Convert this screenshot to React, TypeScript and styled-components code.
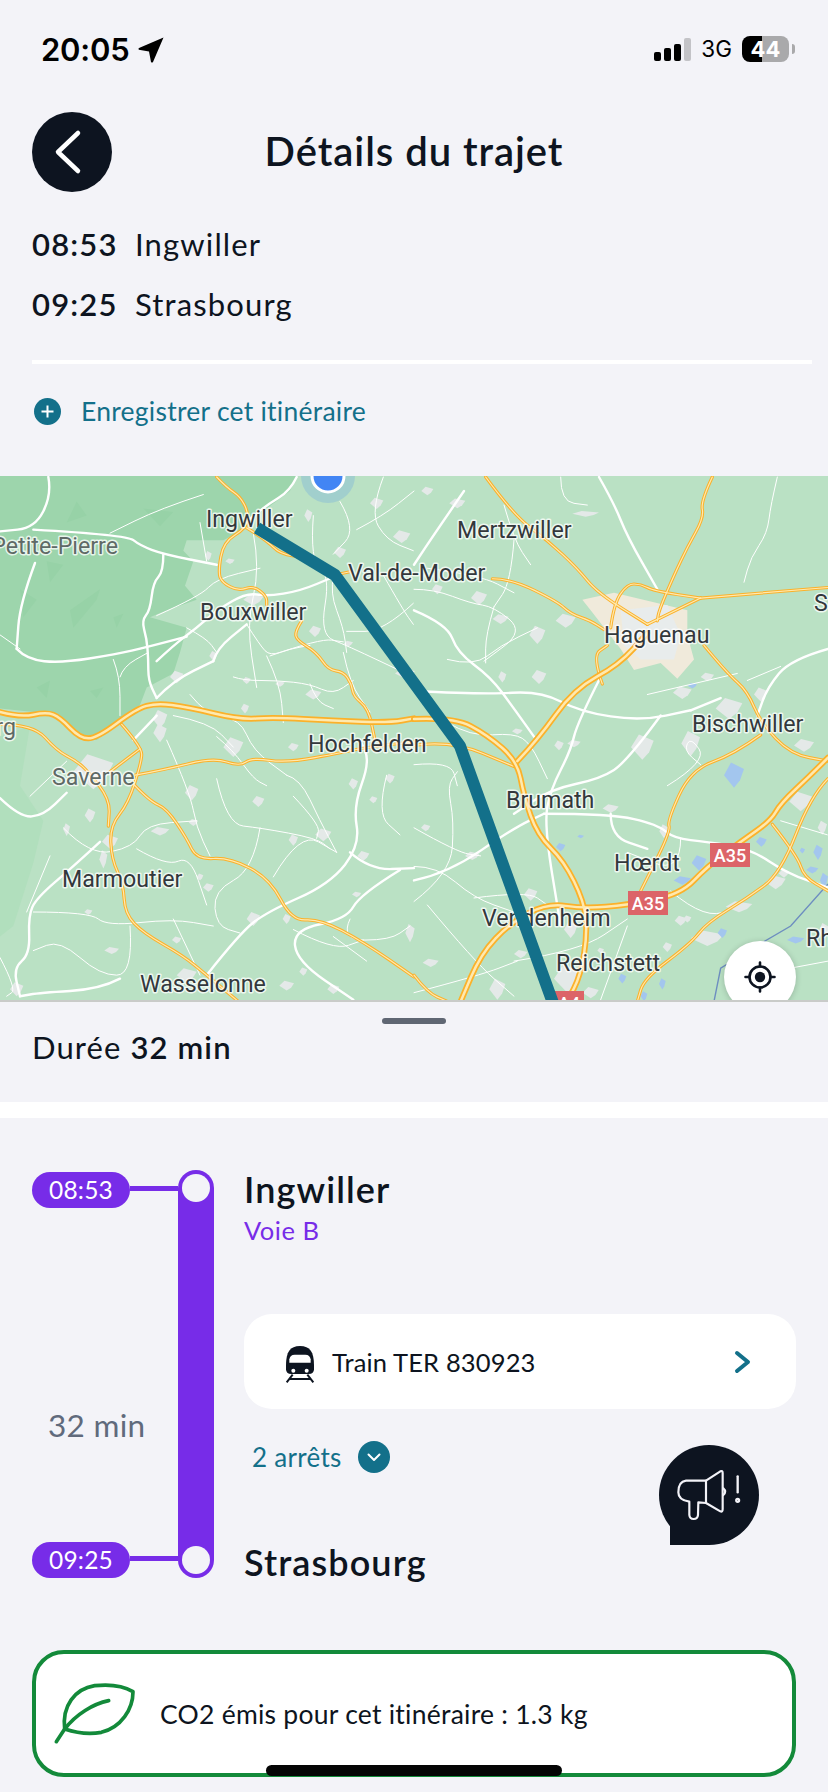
import React from "react";
import styled, { createGlobalStyle } from "styled-components";

const GlobalStyle = createGlobalStyle`
  html, body { margin: 0; padding: 0; background: #f3f3f8; }
  * { box-sizing: border-box; }
`;

const font = `"Lato", "Noto Sans", sans-serif`;
const ink = "#0d1420";
const teal = "#13708a";
const purple = "#772ce8";

const Page = styled.div`
  position: relative;
  width: 828px;
  height: 1792px;
  overflow: hidden;
  background: #f3f3f8;
  font-family: ${font};
  color: ${ink};
`;

const StatusBar = styled.div`
  height: 100px;
  padding: 0 39px 0 41px;
  display: flex;
  align-items: flex-start;
  justify-content: space-between;
  color: #000;
`;
const StatusLeft = styled.div`
  margin-top: 31px;
  display: flex;
  align-items: center;
  gap: 8px;
  font: 600 31px/38px "Inter", sans-serif;
  letter-spacing: -0.2px;
`;
const StatusRight = styled.div`
  margin-top: 36px;
  display: flex;
  align-items: center;
  gap: 10px;
  font: 400 22.5px/26px "Inter", sans-serif;
`;
const Battery = styled.div`
  position: relative;
  width: 47px;
  height: 26px;
  border-radius: 8px;
  background: linear-gradient(90deg, #000 0 43%, #a9a9ab 43% 100%);
  color: #fff;
  font: 700 22px/26px "Inter", sans-serif;
  text-align: center;
  &::after {
    content: "";
    position: absolute;
    right: -6px;
    top: 8px;
    width: 3px;
    height: 10px;
    border-radius: 0 3px 3px 0;
    background: #a9a9ab;
  }
`;

const Header = styled.header`
  margin-top: 12px;
  padding: 0 32px;
  display: grid;
  grid-template-columns: 80px 1fr 80px;
  align-items: center;
`;
const BackButton = styled.div`
  width: 80px;
  height: 80px;
  border-radius: 50%;
  background: ${ink};
  display: flex;
  align-items: center;
  justify-content: center;
`;
const Title = styled.h1`
  margin: -2px 0 0;
  text-align: center;
  font: 600 40px/48px ${font};
  letter-spacing: 0.95px;
`;

const Trip = styled.div`
  margin-top: 22px;
  padding: 0 16px 0 32px;
`;
const TripRow = styled.div`
  height: 60px;
  display: flex;
  align-items: center;
  gap: 18px;
  font: 400 31px/40px ${font};
  letter-spacing: 1.15px;
`;
const TripTime = styled.span`
  font-weight: 600;
  width: 85px;
`;
const Divider = styled.div`
  margin: 26px 16px 0 32px;
  height: 4px;
  background: #fff;
`;
const SaveRow = styled.div`
  margin-top: 32px;
  height: 30px;
  padding-left: 34px;
  display: flex;
  align-items: center;
  gap: 20px;
  color: ${teal};
  font: 400 26.5px/30px ${font};
  letter-spacing: 0.25px;
`;
const RoundIcon = styled.span<{ $size: number }>`
  width: ${(p) => p.$size}px;
  height: ${(p) => p.$size}px;
  border-radius: 50%;
  background: ${teal};
  display: flex;
  align-items: center;
  justify-content: center;
  flex: none;
`;

const MapFrame = styled.div`
  position: relative;
  margin-top: 50px;
  height: 526px;
  overflow: hidden;
  background: #bae1c4;
  border-bottom: 2px solid #c9cbc9;
`;
const MapArt = styled.svg`
  display: block;
  width: 828px;
  height: 526px;
`;
const LocateButton = styled.div`
  position: absolute;
  left: 724px;
  top: 465px;
  width: 72px;
  height: 72px;
  border-radius: 50%;
  background: #fff;
  box-shadow: 0 1px 6px rgba(0, 0, 0, 0.2);
  display: flex;
  align-items: center;
  justify-content: center;
`;

const Sheet = styled.section`
  height: 100px;
  padding: 16px 32px 0;
`;
const Handle = styled.div`
  width: 64px;
  height: 6px;
  margin: 0 auto;
  border-radius: 3px;
  background: #5f6673;
`;
const Duration = styled.div`
  margin-top: 3px;
  font: 400 31px/40px ${font};
  letter-spacing: 1.1px;
  b {
    font-weight: 600;
  }
`;
const WhiteBand = styled.div`
  height: 16px;
  background: #fff;
`;

const Journey = styled.section`
  padding: 52px 32px 0;
  height: 532px;
  display: grid;
  grid-template-columns: 146px 36px 1fr;
  align-items: start;
`;
const TimesColumn = styled.div`
  height: 408px;
  display: flex;
  flex-direction: column;
  padding-top: 2px;
`;
const TimeRow = styled.div`
  display: flex;
  align-items: center;
`;
const Pill = styled.div`
  width: 98px;
  height: 36px;
  border-radius: 18px;
  background: ${purple};
  color: #fff;
  text-align: center;
  font: 400 24.5px/36px ${font};
  letter-spacing: 0.2px;
`;
const Connector = styled.div`
  flex: 1;
  height: 5px;
  margin-top: -4px;
  background: ${purple};
`;
const JourneyTime = styled.div`
  flex: 1;
  padding: 197px 0 0 16px;
  color: #606a7c;
  font: 400 31.5px/40px ${font};
  letter-spacing: 0.3px;
`;
const Rail = styled.div`
  height: 408px;
  padding: 4px;
  border-radius: 18px;
  background: ${purple};
  display: flex;
  flex-direction: column;
  justify-content: space-between;
`;
const Stop = styled.div`
  height: 28px;
  border-radius: 50%;
  background: #f3f3f8;
`;
const Details = styled.div`
  margin: -3px 0 0 30px;
`;
const StationName = styled.div`
  font: 600 36px/44px ${font};
  letter-spacing: 1.1px;
`;
const Platform = styled.div`
  color: ${purple};
  font: 400 25.5px/38px ${font};
  letter-spacing: 0.5px;
`;
const VehicleCard = styled.div`
  margin-top: 65px;
  height: 95px;
  padding: 0 44px 0 26px;
  border-radius: 28px;
  background: #fff;
  display: flex;
  align-items: center;
  gap: 2px;
  font: 400 25.5px/32px ${font};
  letter-spacing: 0.15px;
`;
const VehicleName = styled.span`
  flex: 1;
`;
const StopsToggle = styled.div`
  margin: 30px 0 65px 8px;
  height: 36px;
  display: flex;
  align-items: center;
  gap: 16px;
  color: ${teal};
  font: 400 26px/36px ${font};
  letter-spacing: 0.3px;
`;

const Bubble = styled.div`
  position: absolute;
  left: 659px;
  top: 1445px;
  width: 100px;
  height: 100px;
  border-radius: 50%;
  background: ${ink};
  &::after {
    content: "";
    position: absolute;
    left: 11px;
    bottom: 0;
    width: 40px;
    height: 30px;
    background: ${ink};
  }
  svg {
    position: absolute;
    z-index: 1;
    left: -18px;
    top: -16px;
  }
`;

const CarbonCard = styled.section`
  margin: 0 32px;
  height: 127px;
  padding: 0 2px;
  border: 4px solid #138a3a;
  border-radius: 32px;
  background: #fff;
  display: flex;
  align-items: center;
  gap: 12px;
  font: 400 26.5px/32px ${font};
  letter-spacing: 0.25px;
`;
const HomeIndicator = styled.div`
  position: absolute;
  left: 266px;
  top: 1765px;
  width: 296px;
  height: 11px;
  border-radius: 6px;
  background: #050505;
`;

type Pts = string;
const forest: Pts =
  "0,17 890,17 870,60 800,110 750,140 740,165 670,200 560,200 550,230 580,260 555,330 590,370 500,400 450,420 560,450 540,520 520,580 440,620 420,670 290,770 240,760 180,710 100,690 0,680";

const forestShade: Pts[] = [
  "210,400 300,340 290,370 220,450",
  "60,340 110,370 70,420",
  "140,260 190,270 150,320",
  "230,90 260,130 200,150",
  "340,420 370,410 350,450",
  "270,630 310,620 290,650",
  "430,110 520,120 480,160",
  "110,620 150,600 140,650",
];
const lowerShade: Pts = "0,760 90,730 60,900 130,1000 100,1120 40,1300 0,1330";

const whiteMajorL: Pts[] = [
  "145,20 155,70 105,165 0,175",
  "100,170 380,185 420,215 490,240 650,270",
  "490,240 490,290 460,320 450,400 425,430 440,480 445,540 445,600 470,650",
  "50,510 80,540 185,550 350,525 440,505 560,475",
  "105,265 60,380 50,510",
  "470,650 520,600 640,545",
  "470,545 520,500 590,450 650,400 740,350 800,360 900,345 1000,305",
  "890,20 870,60 800,100 750,140",
  "400,770 470,700",
  "0,935 60,990 130,985 200,920",
  "300,1060 220,1130 110,1220 85,1270 90,1380 40,1420 60,1500",
  "620,1440 720,1320 800,1260 990,1180 1080,1070 1060,960 1110,830 1080,770",
  "1050,1090 1110,1140 1242,1135",
  "1200,1140 1080,1210 1040,1280 880,1310 890,1400 1060,1510",
  "640,545 650,510 740,440",
  "360,1450 300,1480 120,1490 60,1500",
];
const whiteThinL: Pts[] = [
  "0,470 60,510",
  "470,415 600,360 650,310 780,280",
  "610,70 480,110 330,180",
  "360,590 370,560 445,520",
  "600,150 620,260",
  "760,180 780,280 740,440 770,620",
  "940,130 930,260 990,300 960,470 1040,500 1240,590",
  "1020,90 1070,170 1000,240",
  "1030,520 1050,610 1110,690",
  "800,530 840,610 850,720",
  "570,640 620,700 720,710 760,800 860,870",
  "500,770 570,920 590,1020 630,1100",
  "650,880 680,1010 780,1020 950,1050 990,1080",
  "880,930 960,1010 950,1050",
  "780,1020 760,1140 640,1200 650,1300 720,1320",
  "190,1020 270,1100 400,1075 440,1010 590,1000",
  "410,1080 500,1130 570,1100 620,1240",
  "100,1260 270,1260 320,1300 520,1280 640,1300",
  "390,1300 400,1440 300,1440 180,1340 100,1370",
  "520,1280 600,1440",
  "820,1160 900,1030 1010,1090",
  "1050,1280 1020,1340 1170,1340 1230,1300",
  "880,1310 1000,1370 1090,1340",
  "0,1390 50,1480 20,1500",
  "560,450 620,480 650,520",
  "740,440 780,500 810,530 870,510 930,500",
  "810,530 960,480 1030,490",
  "700,590 730,600 830,600 930,610 1000,640 1060,600",
  "930,610 950,660 1000,680",
  "1000,305 990,350 1030,450 1040,520",
  "1240,380 1150,460 1040,460",
  "340,540 360,590 360,700",
  "650,760 700,800 760,880 800,900",
  "520,700 630,720 700,790",
  "860,870 900,880 960,1000 1010,1090",
  "1150,20 1110,120 1160,200 1240,230",
  "1160,870 1130,980 1200,1040",
  "1070,170 1150,130 1242,60",
  "1150,300 1210,400 1240,440",
  "1100,1400 1000,1330",
  "150,1100 80,1260",
  "200,830 90,930",
];
const orangeThinL: Pts[] = [
  "650,20 680,50 720,75 745,120 740,165 670,205 655,290 665,320 715,345 760,330 800,360 800,385",
  "740,165 800,200 840,240 920,250 1000,300 1050,290",
  "905,430 885,460 890,485 950,520 985,570 1030,575 1055,610 1060,645 1105,680 1125,770",
  "365,725 425,790 425,830 385,950 330,1015 335,1110 370,1180 375,1265 430,1320 550,1385 620,1440 715,1515",
  "0,725 100,725 170,800 230,830 265,860 330,940 325,1015",
  "330,860 420,795",
  "405,870 490,855 640,820 720,845 755,820 860,835 1030,805 1100,790 1242,775",
  "400,895 450,945 500,965 560,1050 590,1110 690,1105 810,1165 875,1285 960,1280 1090,1345 1242,1445",
];
const orangeMajorL: Pts[] = [
  "0,690 60,705 140,690 180,705 240,765 290,765 410,680 470,665 560,675 720,712 820,705 1000,715 1170,720 1242,708",
];
const orangeThinR: Pts[] = [
  "0,785 110,770 300,845",
  "215,20 300,130 400,200 490,280 550,350 700,440",
  "235,310 290,310 430,375 470,410 530,430 570,455",
  "895,20 860,90 870,135 820,220 780,300 735,400 730,430",
  "565,610 535,530 580,500",
  "590,450 600,380 640,325 680,325 720,345 860,365",
  "700,440 860,365",
  "870,500 940,580 1000,630 1040,720 1130,810 1242,830",
  "1040,755 960,810 830,855 760,1000 770,1030 680,1200",
  "1075,1010 1150,1100 1170,1160 1242,1200",
  "1242,880 1190,930 1100,1150 1000,1220 880,1290 830,1350 690,1450 670,1515",
  "0,1440 40,1490 100,1515",
  "860,365 1242,335",
];
const orangeMajorR: Pts[] = [
  "0,710 120,705 220,755 310,830 330,930 370,1040 450,1115 510,1230 520,1320 500,1440 460,1515",
  "310,830 370,770 480,625 615,555 700,465",
  "1242,820 1190,870 1100,950 1070,1000 980,1060 880,1130 800,1210 640,1240 510,1250 400,1235 290,1290 200,1380 140,1515",
];
const whiteMajorR: Pts[] = [
  "555,20 600,95 640,190 730,340",
  "0,400 100,440 130,520 230,590 300,680 360,760",
  "0,630 210,640 380,630 500,690 680,715 830,685",
  "740,700 640,830 560,880 410,910 300,980",
  "560,590 490,720 470,800 410,910 390,1010 440,1300",
  "1242,510 1130,540 1060,620 1030,700",
  "830,685 920,650",
  "390,980 590,980 730,1010 780,1050 880,1060 1010,1080 1120,1150 1242,1190",
  "590,980 590,1045 700,1080",
  "0,1170 100,1150 300,1020 390,980",
  "150,60 70,170 0,270",
];
const whiteThinR: Pts[] = [
  "0,340 60,340 170,380 240,390 330,460 210,545",
  "240,390 215,470 215,550",
  "300,200 290,320 240,390",
  "0,1230 110,1150 120,1000 100,900 130,860",
  "0,1020 130,1090 200,1100",
  "0,1130 70,1130 180,1220 300,1260",
  "40,1240 180,1400 300,1500",
  "640,1300 560,1510",
  "770,1200 880,1290 1000,1220",
  "1090,20 1070,100 1060,180 1010,250 990,320",
  "970,580 700,640",
  "300,1400 500,1370 640,1280",
  "0,1490 200,1440 310,1400",
  "760,900 880,830 830,760 810,800 860,840",
  "0,840 110,830 130,900",
  "100,720 170,760 300,750 350,780 400,880",
  "100,540 180,560 260,500 370,450",
  "270,100 300,200 350,270",
  "40,280 200,300 300,350",
  "440,20 440,90 520,100",
  "800,1050 800,1150 640,1090",
  "1000,600 1100,560",
  "1100,1000 1240,1040",
  "180,1220 340,1200 400,1240",
  "1130,1420 1242,1400",
];
const townsL: number[][] = [
  [760,370,30,16],[280,860,60,50],[700,790,30,28],[480,750,20,26],[940,640,24,14],[735,680,12,14],[1130,95,20,16],[1205,190,26,18],[1020,235,18,16],[925,130,12,18],[575,920,20,22],[775,945,18,16],[1060,895,14,16],[480,1030,28,12],[970,1040,24,18],[880,1055,14,16],[580,1005,14,10],[330,1060,24,20],[310,1110,12,26],[200,1025,10,18],[265,1260,12,8],[335,1370,22,10],[530,1340,14,10],[760,1280,20,20],[860,1280,12,14],[1090,1100,18,14],[1215,580,30,14],[530,590,20,18],[640,530,12,14],[625,245,10,14],[690,260,14,8],[945,460,18,16],[840,610,14,8],[480,710,22,26],[1170,880,14,14],[1120,940,12,10],[860,1470,22,14],[1230,1320,14,26],[1070,1210,14,8],[625,1190,16,12],[600,1160,10,10],[50,1480,20,20],[560,1440,30,20],[740,600,12,10],[270,985,16,20],[880,790,16,12],[1045,495,14,8],[910,1430,12,12],[1000,1480,18,14],
];
const townsR: number[][] = [
  [130,95,24,14],[40,60,18,12],[515,125,40,8],[195,365,24,20],[260,425,24,14],[370,470,24,26],[455,430,30,20],[265,590,12,16],[375,590,22,20],[70,340,16,14],[310,745,16,8],[435,785,14,14],[480,780,20,10],[685,790,34,36],[830,780,28,36],[880,590,20,12],[805,635,28,18],[945,680,40,30],[1040,640,20,20],[590,965,24,12],[750,1030,14,20],[1170,785,30,18],[1160,945,34,28],[1085,1175,30,20],[975,1245,40,16],[880,1335,50,22],[800,1285,18,14],[560,1370,10,8],[470,1310,20,24],[350,1210,20,18],[175,1100,22,12],[35,1020,14,10],[50,1405,24,12],[250,1480,24,30],[460,1450,40,40],[530,1490,24,16],[760,1360,14,14],[320,1380,20,12],[1225,1020,14,20],[820,1280,12,10],[1230,1315,16,24],[1110,1150,16,12],
];
const waterR: number[][] = [
  [960,870,30,36],[835,615,14,8],[855,1120,22,22],[805,1170,26,12],[1042,1060,16,14],[1212,1090,14,22],[925,1320,14,14],[1145,1340,26,10],[625,1450,12,14],[440,1075,14,12],[1165,1085,8,8],[690,1500,10,14],[745,1465,10,16],[1195,1140,18,10],[500,1045,10,5],[1230,1170,12,22],
];

const diamond = ([x, y, w, h]: number[]) =>
  `${x - w},${y} ${x - w * 0.3},${y - h} ${x + w},${y - h * 0.5} ${x + w * 0.6},${y + h * 0.4} ${x},${y + h}`;

const smooth = (pts: Pts) => {
  const p = pts.split(" ").map((s) => s.split(",").map(Number));
  let d = `M${p[0][0]} ${p[0][1]}`;
  for (let i = 1; i < p.length - 1; i++) {
    const mx = (p[i][0] + p[i + 1][0]) / 2;
    const my = (p[i][1] + p[i + 1][1]) / 2;
    d += `Q${p[i][0]} ${p[i][1]} ${mx} ${my}`;
  }
  const last = p[p.length - 1];
  return `${d}L${last[0]} ${last[1]}`;
};

const Lines = ({ data, color, width }: { data: Pts[]; color: string; width: number }) => (
  <g fill="none" stroke={color} strokeWidth={width} strokeLinejoin="round" strokeLinecap="round">
    {data.map((p, i) => (
      <path key={i} d={smooth(p)} vectorEffect="non-scaling-stroke" />
    ))}
  </g>
);

const Road = ({ data, major }: { data: Pts[]; major?: boolean }) => (
  <>
    <Lines data={data} color="#fbb12a" width={major ? 6 : 3.2} />
    <Lines data={data} color="#ffe9ae" width={major ? 2.5 : 1.2} />
  </>
);

const labelStyle = {
  fontFamily: '"Roboto", sans-serif',
  fontSize: 23.2,
  paintOrder: "stroke",
  stroke: "#ffffff",
  strokeOpacity: 0.75,
  strokeWidth: 3,
  strokeLinejoin: "round",
} as React.CSSProperties;

const labels: [string, number, number, string, ("start" | "end")?][] = [
  ["Ingwiller", 206, 527, "#33383c"],
  ["Petite-Pierre", 118, 554, "#5f6a66", "end"],
  ["Val-de-Moder", 348, 581, "#33383c"],
  ["Bouxwiller", 200, 620, "#33383c"],
  ["Hochfelden", 308, 752, "#33383c"],
  ["Saverne", 52, 785, "#5f6a66"],
  ["rg", 16, 735, "#5f6a66", "end"],
  ["Marmoutier", 62, 887, "#33383c"],
  ["Wasselonne", 140, 992, "#33383c"],
  ["Mertzwiller", 457, 538, "#33383c"],
  ["Haguenau", 604, 643, "#33383c"],
  ["Bischwiller", 692, 732, "#33383c"],
  ["Brumath", 506, 808, "#33383c"],
  ["Hœrdt", 614, 871, "#33383c"],
  ["Vendenheim", 482, 926, "#33383c"],
  ["Reichstett", 556, 971, "#33383c"],
  ["S", 814, 611, "#33383c"],
  ["Rh", 806, 946, "#33383c"],
];

const ShieldBadge = ({ x, y, w, h, text }: { x: number; y: number; w: number; h: number; text: string }) => (
  <g>
    <rect x={x} y={y} width={w} height={h} fill="#dc6468" />
    <text x={x + w / 2} y={y + 19} textAnchor="middle" fill="#fff" fontFamily="Roboto, sans-serif" fontSize="18" fontWeight="500">
      {text}
    </text>
  </g>
);

const RoadMap = () => (
  <MapArt viewBox="0 476 828 526">
    <g transform="translate(0,470) scale(0.33333,0.3508)">
      <polygon points={lowerShade} fill="#b1dfbd" />
      <polygon points={forest} fill="#9dd5ac" />
      {forestShade.map((p, i) => (
        <polygon key={i} points={p} fill="#97d2a7" />
      ))}
      {townsL.map((t, i) => (
        <polygon key={i} points={diamond(t)} fill="#e4e9e8" />
      ))}
      <Lines data={whiteThinL} color="#fff" width={1} />
      <Lines data={whiteMajorL} color="#fff" width={2.4} />
      <Road data={orangeThinL} />
      <Road data={orangeMajorL} major />
    </g>
    <g transform="translate(414,470) scale(0.33333,0.3508)">
      <polygon points="505,370 600,350 820,400 820,470 840,540 790,595 740,550 660,570 620,510 530,400" fill="#f0eadb" />
      <polygon points="620,400 760,385 800,470 780,540 680,540 630,500" fill="#e8ecec" />
      {townsR.map((t, i) => (
        <polygon key={i} points={diamond(t)} fill="#e4e9e8" />
      ))}
      {waterR.map((t, i) => (
        <polygon key={i} points={diamond(t)} fill="#a3c6ee" />
      ))}
      <polyline
        points="900,1515 920,1420 1040,1350 1130,1300 1242,1180"
        fill="none"
        stroke="#6d8ec0"
        strokeWidth="1.4"
        vectorEffect="non-scaling-stroke"
      />
      <Lines data={whiteThinR} color="#fff" width={1} />
      <Lines data={whiteMajorR} color="#fff" width={2.4} />
      <Road data={orangeThinR} />
      <Road data={orangeMajorR} major />
    </g>
    <circle cx="328" cy="476" r="27" fill="#4285f4" fillOpacity="0.2" />
    <circle cx="328" cy="476" r="16" fill="#4285f4" stroke="#fff" strokeWidth="3" />
    {labels.map(([t, x, y, c, a]) => (
      <text key={t} x={x} y={y} fill={c} textAnchor={a ?? "start"} style={labelStyle}>
        {t}
      </text>
    ))}
    <ShieldBadge x={710} y={843} w={40} h={24} text="A35" />
    <ShieldBadge x={628} y={891} w={40} h={24} text="A35" />
    <ShieldBadge x={554} y={991} w={30} h={24} text="A4" />
    <polyline
      points="257,528 335,575 460,746 553,1003"
      fill="none"
      stroke={teal}
      strokeWidth="12"
      strokeLinejoin="round"
    />
  </MapArt>
);

const TrainIcon = () => (
  <svg width="60" height="60" viewBox="0 0 180 180">
    <path d="M48 100 C48 60 60 42 90 42 C120 42 132 60 132 100 V112 Q132 126 116 126 H64 Q48 126 48 112 Z" fill={ink} />
    <path d="M58 92 V82 Q60 68 74 68 H106 Q120 68 122 82 V92 Z" fill="#fff" />
    <circle cx="70" cy="116" r="6" fill="#fff" />
    <circle cx="110" cy="116" r="6" fill="#fff" />
    <path d="M68 128 L50 151 M112 128 L130 151 M58 141 H122" stroke={ink} strokeWidth="6" fill="none" />
  </svg>
);

const LeafIcon = () => (
  <svg width="110" height="90" viewBox="0 0 330 270" fill="none" stroke="#138a3a" strokeWidth="11" strokeLinecap="round" strokeLinejoin="round">
    <path d="M80 180 C72 110 110 60 170 50 C215 45 255 50 285 68 C285 120 250 175 190 190 C150 197 110 190 80 180 Z" />
    <path d="M212 95 C165 105 115 135 80 180 L55 218" />
  </svg>
);

export default function App() {
  return (
    <Page>
      <GlobalStyle />
      <StatusBar>
        <StatusLeft>
          20:05
          <svg width="26" height="26" viewBox="0 0 26 26">
            <path d="M25.5 0.5 L15 25 Q14 26 13 25 L11 14.5 L0.8 12.8 Q0 11.8 1 11 Z" fill="#000" />
          </svg>
        </StatusLeft>
        <StatusRight>
          <svg width="37" height="25" viewBox="0 0 37 25">
            <rect x="0" y="15" width="7" height="9" rx="2" fill="#000" />
            <rect x="10" y="11" width="7" height="13" rx="2" fill="#000" />
            <rect x="20" y="7" width="7" height="17" rx="2" fill="#000" />
            <rect x="30" y="1" width="7" height="23" rx="2" fill="#c3c3c7" />
          </svg>
          3G
          <Battery>44</Battery>
        </StatusRight>
      </StatusBar>

      <Header>
        <BackButton>
          <svg width="80" height="80" viewBox="0 0 80 80" fill="none">
            <path d="M46 21 L26 40 L46 59" stroke="#fff" strokeWidth="4.5" strokeLinecap="round" strokeLinejoin="round" />
          </svg>
        </BackButton>
        <Title>Détails du trajet</Title>
      </Header>

      <Trip>
        <TripRow>
          <TripTime>08:53</TripTime>
          <span>Ingwiller</span>
        </TripRow>
        <TripRow>
          <TripTime>09:25</TripTime>
          <span>Strasbourg</span>
        </TripRow>
      </Trip>
      <Divider />
      <SaveRow>
        <RoundIcon $size={27}>
          <svg width="15" height="15" viewBox="0 0 15 15">
            <path d="M7.5 1.5 V13.5 M1.5 7.5 H13.5" stroke="#fff" strokeWidth="2" />
          </svg>
        </RoundIcon>
        Enregistrer cet itinéraire
      </SaveRow>

      <MapFrame>
        <RoadMap />
        <LocateButton>
          <svg width="36" height="36" viewBox="0 0 36 36" fill="none" stroke={ink}>
            <circle cx="18" cy="18" r="10.5" strokeWidth="2.6" />
            <circle cx="18" cy="18" r="5.2" fill={ink} stroke="none" />
            <path d="M18 3.5 V7.5 M18 28.5 V32.5 M3.5 18 H7.5 M28.5 18 H32.5" strokeWidth="2.6" strokeLinecap="round" />
          </svg>
        </LocateButton>
      </MapFrame>

      <Sheet>
        <Handle />
        <Duration>
          Durée <b>32 min</b>
        </Duration>
      </Sheet>
      <WhiteBand />

      <Journey>
        <TimesColumn>
          <TimeRow>
            <Pill>08:53</Pill>
            <Connector />
          </TimeRow>
          <JourneyTime>32 min</JourneyTime>
          <TimeRow>
            <Pill>09:25</Pill>
            <Connector />
          </TimeRow>
        </TimesColumn>
        <Rail>
          <Stop />
          <Stop />
        </Rail>
        <Details>
          <StationName>Ingwiller</StationName>
          <Platform>Voie B</Platform>
          <VehicleCard>
            <TrainIcon />
            <VehicleName>Train TER 830923</VehicleName>
            <svg width="18" height="24" viewBox="0 0 18 24" fill="none">
              <path d="M3 3 L14 12 L3 21" stroke={teal} strokeWidth="4" strokeLinecap="round" strokeLinejoin="round" />
            </svg>
          </VehicleCard>
          <StopsToggle>
            2 arrêts
            <RoundIcon $size={32}>
              <svg width="16" height="16" viewBox="0 0 16 16" fill="none">
                <path d="M2.5 5.5 L8 11 L13.5 5.5" stroke="#fff" strokeWidth="2" strokeLinecap="round" strokeLinejoin="round" />
              </svg>
            </RoundIcon>
          </StopsToggle>
          <StationName>Strasbourg</StationName>
        </Details>
      </Journey>

      <CarbonCard>
        <LeafIcon />
        CO2 émis pour cet itinéraire : 1.3 kg
      </CarbonCard>

      <Bubble>
        <svg width="120" height="120" viewBox="0 0 360 360" fill="none" stroke="#f3f3f8" strokeWidth="6.5" strokeLinecap="round" strokeLinejoin="round">
          <path d="M195 155 L238 127 Q245 124 245 132 V240 Q245 250 238 247 L195 222 Z" />
          <path d="M195 155 H135 Q112 158 112 190 Q112 214 145 218 V258 Q146 270 158 270 Q170 270 171 258 L172 220 L195 222" />
          <path d="M247 178 Q258 188 247 198" />
          <path d="M290 142 V190" strokeWidth="7" />
          <circle cx="290" cy="214" r="4.5" />
        </svg>
      </Bubble>
      <HomeIndicator />
    </Page>
  );
}
